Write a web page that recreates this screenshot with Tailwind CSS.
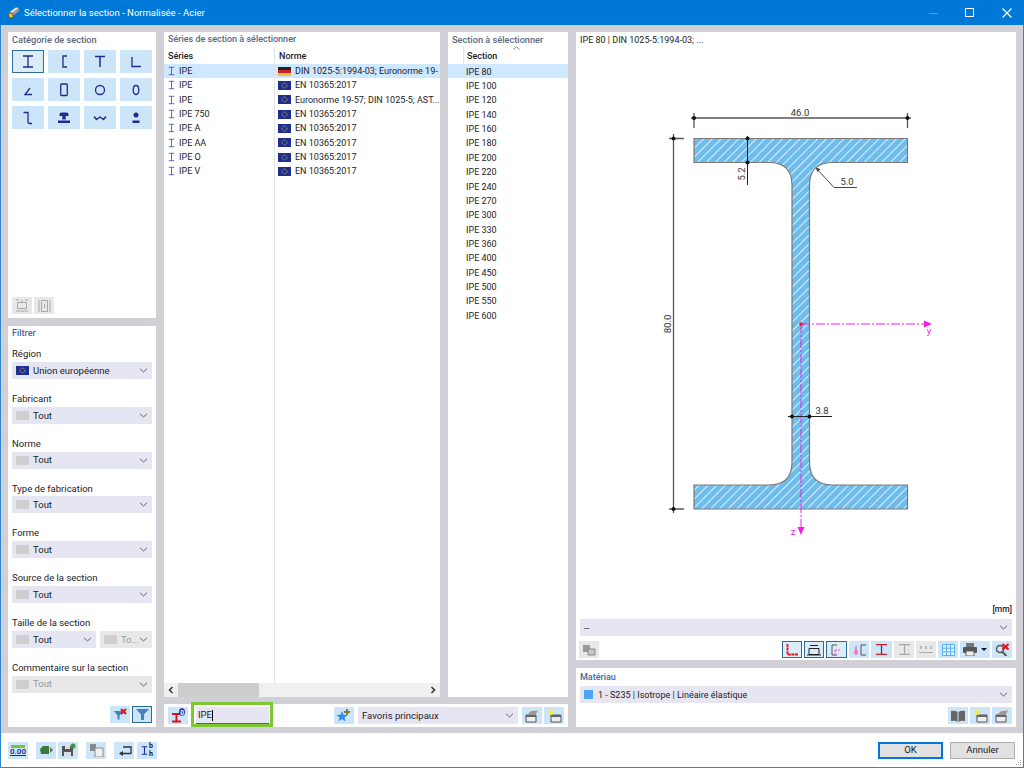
<!DOCTYPE html>
<html lang="fr">

<head>
  <meta charset="UTF-8">
  <title>Sélectionner la section - Normalisée - Acier</title>
  <script src="https://cdn.jsdelivr.net/npm/@tailwindcss/browser@4"></script>
</head>

<body class="w-[1024px] h-[768px] overflow-hidden bg-white font-['Roboto',sans-serif] text-[9.5px] leading-none text-[#1c1c28]">
  <!-- shared glyphs -->
  <svg class="hidden">
    <symbol id="eu" viewBox="0 0 13 9"><rect width="13" height="9" fill="#1f2f8f"/><circle cx="6.5" cy="4.5" r="2.4" fill="none" stroke="#a9a56a" stroke-width="1" stroke-dasharray="1 .6"/></symbol>
    <symbol id="de" viewBox="0 0 13 9"><rect width="13" height="3" fill="#222"/><rect y="3" width="13" height="3" fill="#c8202a"/><rect y="6" width="13" height="3" fill="#eec22e"/></symbol>
    <symbol id="none" viewBox="0 0 13 9"><rect width="13" height="9" fill="#cfcfcf"/></symbol>
    <symbol id="chev" viewBox="0 0 9 5"><path d="M1 .8 4.5 4 8 .8" fill="none" stroke="#666" stroke-width="1"/></symbol>
    <symbol id="ib" viewBox="0 0 9 11"><path d="M1 .7h7M1 10.3h7M4.5 .7v9.6" fill="none" stroke="#3443a8" stroke-width="1"/></symbol>
  </svg>

  <div class="flex flex-col h-full border-x border-b border-[#2f86cc]">
    <!-- title bar -->
    <div class="flex items-center h-[25px] -mx-px bg-[#0078d7] text-white text-[9.5px] shrink-0">
      <svg class="w-[13px] h-[13px] ml-[7px]" viewBox="0 0 13 13"><path d="M2 6.500 8 1.500q3-1 4 1t-1 3.500L6 10z" fill="#8f98a3"/><path d="M3 6 8.500 2q2-.5 2.500.5L5 7z" fill="#e2e4e8"/><path d="M1 7.500 5 7 6.500 11 2.500 12.500z" fill="#f2c420" stroke="#4a4020" stroke-width=".7"/></svg>
      <span class="ml-[4px]">Sélectionner la section - Normalisée - Acier</span>
      <svg class="ml-auto w-[9px] h-[10px]" viewBox="0 0 9 10"><path d="M0 5.500h9" stroke="#4a9ce6"/></svg>
      <svg class="ml-[27px] w-[9px] h-[9px]" viewBox="0 0 9 9"><rect x=".5" y=".5" width="8" height="8" fill="none" stroke="#fff"/></svg>
      <svg class="ml-[28px] mr-[12px] w-[10px] h-[10px]" viewBox="0 0 10 10"><path d="M.5 .5l9 9M9.500 .5l-9 9" stroke="#fff" stroke-width="1.200"/></svg>
    </div>

    <!-- main area -->
    <div class="flex gap-[8px] h-[708px] bg-[#d0d0d6] pt-[7px] pb-[6px] px-[7px] shrink-0">
      <!-- left column -->
      <div class="flex flex-col gap-[8px] w-[148px]">
        <div class="flex flex-col h-[286px] bg-white px-[4px]">
          <div class="h-[18px] pb-[3px] flex items-center text-[9.200px] font-medium text-[#5b6880]">Catégorie de section</div>
          <div class="grid grid-cols-4 gap-x-[4px] gap-y-[5px] w-[140px]">
            <div class="h-[23px] bg-[#dcebf8] border border-[#2d6c9e]"><svg class="w-[30px] h-[21px]" viewBox="1 1 30 21"><path d="M11 6h10M11 17h10M16 6v11" fill="none" stroke="#1e2d8c" stroke-width="1.3"/></svg></div>
            <div class="h-[23px] bg-[#cde5f8]"><svg class="w-[32px] h-[23px]" viewBox="0 0 32 23"><path d="M19 6h-4v11h4" fill="none" stroke="#1e2d8c" stroke-width="1.3"/></svg></div>
            <div class="h-[23px] bg-[#cde5f8]"><svg class="w-[32px] h-[23px]" viewBox="0 0 32 23"><path d="M11 6.500h10M16 6v11" fill="none" stroke="#1e2d8c" stroke-width="1.5"/></svg></div>
            <div class="h-[23px] bg-[#cde5f8]"><svg class="w-[32px] h-[23px]" viewBox="0 0 32 23"><path d="M12 7v9.500h9" fill="none" stroke="#1e2d8c" stroke-width="1.3"/></svg></div>
            <div class="h-[23px] bg-[#cde5f8]"><svg class="w-[32px] h-[23px]" viewBox="0 0 32 23"><path d="M18 10 13 16.500h7" fill="none" stroke="#1e2d8c" stroke-width="1.3"/></svg></div>
            <div class="h-[23px] bg-[#cde5f8]"><svg class="w-[32px] h-[23px]" viewBox="0 0 32 23"><rect x="12.700" y="6" width="6.600" height="11.500" rx="1" fill="none" stroke="#1e2d8c" stroke-width="1.3"/></svg></div>
            <div class="h-[23px] bg-[#cde5f8]"><svg class="w-[32px] h-[23px]" viewBox="0 0 32 23"><circle cx="16" cy="12" r="4.500" fill="none" stroke="#1e2d8c" stroke-width="1.3"/></svg></div>
            <div class="h-[23px] bg-[#cde5f8]"><svg class="w-[32px] h-[23px]" viewBox="0 0 32 23"><ellipse cx="16" cy="12" rx="2.800" ry="4.500" fill="none" stroke="#1e2d8c" stroke-width="1.3"/></svg></div>
            <div class="h-[23px] bg-[#cde5f8]"><svg class="w-[32px] h-[23px]" viewBox="0 0 32 23"><path d="M11.500 6.500h4.500v9q0 2 2 2h2" fill="none" stroke="#1e2d8c" stroke-width="1.3"/></svg></div>
            <div class="h-[23px] bg-[#cde5f8]"><svg class="w-[32px] h-[23px]" viewBox="0 0 32 23"><path d="M11.500 8.500q0-2 2-2h5q2 0 2 2v1.500h-2.800v3.500h-3.400v-3.500h-2.800zM10 14.500h12v2.500h-12z" fill="#1e2d8c"/></svg></div>
            <div class="h-[23px] bg-[#cde5f8]"><svg class="w-[32px] h-[23px]" viewBox="0 0 32 23"><path d="M10 10.500 12.500 13.500 16 11 19.500 13.500 22 10.500" fill="none" stroke="#1e2d8c" stroke-width="1.500" stroke-linejoin="round"/></svg></div>
            <div class="h-[23px] bg-[#cde5f8]"><svg class="w-[32px] h-[23px]" viewBox="0 0 32 23"><circle cx="16" cy="9" r="2.500" fill="#1e2d8c"/><rect x="12.500" y="14.500" width="7" height="2.500" fill="#1e2d8c"/></svg></div>
          </div>
          <div class="mt-auto mb-[4px] flex gap-[2px]">
            <div class="w-[20px] h-[17px] bg-[#e8e8e8] flex items-center justify-center"><svg class="w-[14px] h-[13px]" viewBox="0 0 14 13"><path d="M2.500 3.500h9v6h-9zM1 1h3M10 1h3M1 12h12M7 1v2" fill="none" stroke="#a8a8a8"/></svg></div>
            <div class="w-[20px] h-[17px] bg-[#e8e8e8] flex items-center justify-center"><svg class="w-[13px] h-[14px]" viewBox="0 0 13 14"><path d="M3.500 1.500h6v11h-6zM1 1v12M12 1v12M6.500 5v4" fill="none" stroke="#a8a8a8"/></svg></div>
          </div>
        </div>

        <div class="relative flex flex-col h-[401px] bg-white px-[4px]">
          <div class="h-[15px] mb-[6px] flex items-center text-[9px] font-medium text-[#3d6aa0]">Filtrer</div>
          <div class="h-[44.800px]">
            <div class="h-[15px] pb-[1px] flex items-center">Région</div>
            <div class="flex items-center h-[17px] bg-[#e6e6f2] pl-[4px] pr-[4px]"><svg class="w-[13px] h-[9px]"><use href="#eu"/></svg><span class="ml-[4px] flex-1">Union européenne</span><svg class="w-[9px] h-[5px]"><use href="#chev"/></svg></div>
          </div>
          <div class="h-[44.800px]">
            <div class="h-[15px] pb-[1px] flex items-center">Fabricant</div>
            <div class="flex items-center h-[17px] bg-[#e6e6f2] pl-[4px] pr-[4px]"><svg class="w-[13px] h-[9px]"><use href="#none"/></svg><span class="ml-[4px] flex-1">Tout</span><svg class="w-[9px] h-[5px]"><use href="#chev"/></svg></div>
          </div>
          <div class="h-[44.800px]">
            <div class="h-[15px] pb-[1px] flex items-center">Norme</div>
            <div class="flex items-center h-[17px] bg-[#e6e6f2] pl-[4px] pr-[4px]"><svg class="w-[13px] h-[9px]"><use href="#none"/></svg><span class="ml-[4px] flex-1">Tout</span><svg class="w-[9px] h-[5px]"><use href="#chev"/></svg></div>
          </div>
          <div class="h-[44.800px]">
            <div class="h-[15px] pb-[1px] flex items-center">Type de fabrication</div>
            <div class="flex items-center h-[17px] bg-[#e6e6f2] pl-[4px] pr-[4px]"><svg class="w-[13px] h-[9px]"><use href="#none"/></svg><span class="ml-[4px] flex-1">Tout</span><svg class="w-[9px] h-[5px]"><use href="#chev"/></svg></div>
          </div>
          <div class="h-[44.800px]">
            <div class="h-[15px] pb-[1px] flex items-center">Forme</div>
            <div class="flex items-center h-[17px] bg-[#e6e6f2] pl-[4px] pr-[4px]"><svg class="w-[13px] h-[9px]"><use href="#none"/></svg><span class="ml-[4px] flex-1">Tout</span><svg class="w-[9px] h-[5px]"><use href="#chev"/></svg></div>
          </div>
          <div class="h-[44.800px]">
            <div class="h-[15px] pb-[1px] flex items-center">Source de la section</div>
            <div class="flex items-center h-[17px] bg-[#e6e6f2] pl-[4px] pr-[4px]"><svg class="w-[13px] h-[9px]"><use href="#none"/></svg><span class="ml-[4px] flex-1">Tout</span><svg class="w-[9px] h-[5px]"><use href="#chev"/></svg></div>
          </div>
          <div class="h-[44.800px]">
            <div class="h-[15px] pb-[1px] flex items-center">Taille de la section</div>
            <div class="flex gap-[4px]">
              <div class="flex items-center w-[84px] h-[17px] bg-[#e6e6f2] pl-[4px] pr-[4px]"><svg class="w-[13px] h-[9px]"><use href="#none"/></svg><span class="ml-[4px] flex-1">Tout</span><svg class="w-[9px] h-[5px]"><use href="#chev"/></svg></div>
              <div class="flex items-center w-[52px] h-[17px] bg-[#e8e8e8] pl-[4px] pr-[4px] text-[#999]"><svg class="w-[13px] h-[9px]"><use href="#none"/></svg><span class="ml-[4px] flex-1">To...</span><svg class="w-[9px] h-[5px]"><use href="#chev"/></svg></div>
            </div>
          </div>
          <div class="h-[44.800px]">
            <div class="h-[15px] pb-[1px] flex items-center">Commentaire sur la section</div>
            <div class="flex items-center h-[17px] bg-[#e8e8e8] pl-[4px] pr-[4px] text-[#999]"><svg class="w-[13px] h-[9px]"><use href="#none"/></svg><span class="ml-[4px] flex-1">Tout</span><svg class="w-[9px] h-[5px]"><use href="#chev"/></svg></div>
          </div>
          <div class="mt-auto mb-[4px] flex justify-end gap-[2px]">
            <div class="w-[20px] h-[17px] bg-[#cde5f8] flex items-center justify-center"><svg class="w-[15px] h-[13px]" viewBox="0 0 15 13"><path d="M1 3h9L6.500 7.500V12L4.500 11V7.500z" fill="#4a7fc0"/><path d="M8 1l5 5M13 1 8 6" stroke="#e0101c" stroke-width="2"/></svg></div>
            <div class="w-[20px] h-[17px] bg-[#cde5f8] border border-[#2d6c9e] flex items-center justify-center"><svg class="w-[13px] h-[11px]" viewBox="0 0 13 11"><path d="M0 0h13L8 5.500V11H5V5.500z" fill="#4a7fc0"/></svg></div>
          </div>
        </div>
      </div>

      <!-- middle column -->
      <div class="flex flex-col gap-[7px] w-[404px]">
        <div class="flex gap-[8px] h-[665px]">
          <div class="flex flex-col w-[276px] bg-white">
            <div class="h-[15px] pl-[4px] flex items-center text-[9px] font-medium text-[#5b6880]">Séries de section à sélectionner</div>
            <div class="flex flex-1 text-[9px] [&_span]:pt-[1px]">
              <div class="w-[111px] border-r border-[#e4e4e4] shrink-0">
                <div class="h-[17px] pl-[4px] pt-[2px] flex items-center font-medium">Séries</div>
                <div class="flex items-center h-[14.330px] bg-[#cde8ff] pl-[4px]"><svg class="w-[7px] h-[10px]"><use href="#ib"/></svg><span class="ml-[4px]">IPE</span></div>
                <div class="flex items-center h-[14.330px] pl-[4px]"><svg class="w-[7px] h-[10px]"><use href="#ib"/></svg><span class="ml-[4px]">IPE</span></div>
                <div class="flex items-center h-[14.330px] pl-[4px]"><svg class="w-[7px] h-[10px]"><use href="#ib"/></svg><span class="ml-[4px]">IPE</span></div>
                <div class="flex items-center h-[14.330px] pl-[4px]"><svg class="w-[7px] h-[10px]"><use href="#ib"/></svg><span class="ml-[4px]">IPE 750</span></div>
                <div class="flex items-center h-[14.330px] pl-[4px]"><svg class="w-[7px] h-[10px]"><use href="#ib"/></svg><span class="ml-[4px]">IPE A</span></div>
                <div class="flex items-center h-[14.330px] pl-[4px]"><svg class="w-[7px] h-[10px]"><use href="#ib"/></svg><span class="ml-[4px]">IPE AA</span></div>
                <div class="flex items-center h-[14.330px] pl-[4px]"><svg class="w-[7px] h-[10px]"><use href="#ib"/></svg><span class="ml-[4px]">IPE O</span></div>
                <div class="flex items-center h-[14.330px] pl-[4px]"><svg class="w-[7px] h-[10px]"><use href="#ib"/></svg><span class="ml-[4px]">IPE V</span></div>
              </div>
              <div class="flex-1 min-w-0">
                <div class="h-[17px] pl-[4px] pt-[2px] flex items-center font-medium">Norme</div>
                <div class="flex items-center h-[14.330px] bg-[#cde8ff] pl-[3px] whitespace-nowrap overflow-hidden"><svg class="w-[13px] h-[9px] shrink-0"><use href="#de"/></svg><span class="ml-[4px]">DIN 1025-5:1994-03; Euronorme 19-</span></div>
                <div class="flex items-center h-[14.330px] pl-[3px]"><svg class="w-[13px] h-[9px] shrink-0"><use href="#eu"/></svg><span class="ml-[4px]">EN 10365:2017</span></div>
                <div class="flex items-center h-[14.330px] pl-[3px] whitespace-nowrap overflow-hidden"><svg class="w-[13px] h-[9px] shrink-0"><use href="#eu"/></svg><span class="ml-[4px]">Euronorme 19-57; DIN 1025-5; AST...</span></div>
                <div class="flex items-center h-[14.330px] pl-[3px]"><svg class="w-[13px] h-[9px] shrink-0"><use href="#eu"/></svg><span class="ml-[4px]">EN 10365:2017</span></div>
                <div class="flex items-center h-[14.330px] pl-[3px]"><svg class="w-[13px] h-[9px] shrink-0"><use href="#eu"/></svg><span class="ml-[4px]">EN 10365:2017</span></div>
                <div class="flex items-center h-[14.330px] pl-[3px]"><svg class="w-[13px] h-[9px] shrink-0"><use href="#eu"/></svg><span class="ml-[4px]">EN 10365:2017</span></div>
                <div class="flex items-center h-[14.330px] pl-[3px]"><svg class="w-[13px] h-[9px] shrink-0"><use href="#eu"/></svg><span class="ml-[4px]">EN 10365:2017</span></div>
                <div class="flex items-center h-[14.330px] pl-[3px]"><svg class="w-[13px] h-[9px] shrink-0"><use href="#eu"/></svg><span class="ml-[4px]">EN 10365:2017</span></div>
              </div>
            </div>
            <div class="flex items-center h-[14px] bg-[#f0f0f0]">
              <svg class="w-[14px] h-[14px]" viewBox="0 0 14 14"><path d="M8.500 4 5.500 7l3 3" fill="none" stroke="#333" stroke-width="1.500"/></svg>
              <div class="w-[81px] h-full bg-[#cdcdcd]"></div>
              <svg class="ml-auto w-[14px] h-[14px]" viewBox="0 0 14 14"><path d="M5.500 4l3 3-3 3" fill="none" stroke="#333" stroke-width="1.500"/></svg>
            </div>
          </div>

          <div class="relative w-[120px] bg-white text-[9px]">
            <div class="h-[15px] pl-[4px] flex items-center text-[9.200px] font-medium text-[#5b6880]">Section à sélectionner</div>
            <svg class="absolute left-[65px] top-[14px] w-[7px] h-[4px]" viewBox="0 0 7 4"><path d="M.5 3.500 3.500 .8l3 2.700" fill="none" stroke="#888"/></svg>
            <div class="ml-[15px] h-[17px] pl-[3px] pt-[2px] flex items-center font-medium border-l border-[#e4e4e4]">Section</div>
            <div class="[&>div]:pt-[2px]">
              <div class="flex items-center h-[14.370px] bg-[#cde8ff] pl-[18px]">IPE 80</div>
              <div class="flex items-center h-[14.370px] pl-[18px]">IPE 100</div>
              <div class="flex items-center h-[14.370px] pl-[18px]">IPE 120</div>
              <div class="flex items-center h-[14.370px] pl-[18px]">IPE 140</div>
              <div class="flex items-center h-[14.370px] pl-[18px]">IPE 160</div>
              <div class="flex items-center h-[14.370px] pl-[18px]">IPE 180</div>
              <div class="flex items-center h-[14.370px] pl-[18px]">IPE 200</div>
              <div class="flex items-center h-[14.370px] pl-[18px]">IPE 220</div>
              <div class="flex items-center h-[14.370px] pl-[18px]">IPE 240</div>
              <div class="flex items-center h-[14.370px] pl-[18px]">IPE 270</div>
              <div class="flex items-center h-[14.370px] pl-[18px]">IPE 300</div>
              <div class="flex items-center h-[14.370px] pl-[18px]">IPE 330</div>
              <div class="flex items-center h-[14.370px] pl-[18px]">IPE 360</div>
              <div class="flex items-center h-[14.370px] pl-[18px]">IPE 400</div>
              <div class="flex items-center h-[14.370px] pl-[18px]">IPE 450</div>
              <div class="flex items-center h-[14.370px] pl-[18px]">IPE 500</div>
              <div class="flex items-center h-[14.370px] pl-[18px]">IPE 550</div>
              <div class="flex items-center h-[14.370px] pl-[18px]">IPE 600</div>
            </div>
          </div>
        </div>

        <!-- search and favourites -->
        <div class="flex items-center h-[23px] bg-white pl-[4px] pr-[4px]">
          <div class="w-[20px] h-[17px] bg-[#cde5f8] flex items-center justify-center"><svg class="w-[16px] h-[15px]" viewBox="0 0 16 15"><path d="M2 6h9M2 13.500h9M6.500 6v7" stroke="#d8121c" stroke-width="2" fill="none"/><ellipse cx="12" cy="4" rx="3" ry="3.800" fill="#1f2f9f"/><text x="12" y="6.500" font-size="6.500" font-weight="700" text-anchor="middle" fill="#fff">0</text></svg></div>
          <div class="relative ml-[8px] w-[73px] h-[17px] bg-[#e6e6f2] border-b border-[#5a55a5] pl-[2px] flex items-center">IPE<span class="w-px h-[11px] bg-black"></span>
            <div class="absolute left-[-5px] right-[-4px] top-[-5px] bottom-[-4px] border-[3px] border-[#7dc832]"></div>
          </div>
          <div class="ml-[65px] w-[20px] h-[17px] bg-[#cde5f8] flex items-center justify-center"><svg class="w-[16px] h-[15px]" viewBox="0 0 16 15"><path d="M6 3l1.600 3.700 4 .3-3 2.600 1 3.900L6 11l-3.500 2.500 1-3.900-3-2.600 4-.3z" fill="#2f8ff0"/><path d="M11 1v6M8 4h6" stroke="#8a7a30" stroke-width="2"/></svg></div>
          <div class="ml-[4px] flex items-center w-[160px] h-[17px] bg-[#e6e6f2] pl-[4px] pr-[4px]"><span class="flex-1">Favoris principaux</span><svg class="w-[9px] h-[5px]"><use href="#chev"/></svg></div>
          <div class="ml-[4px] w-[20px] h-[17px] bg-[#cde5f8] flex items-center justify-center"><svg class="w-[15px] h-[14px]" viewBox="0 0 15 14"><path d="M1 6h10v7H1z" fill="#eee" stroke="#555"/><path d="M1 6h10v2H1z" fill="#666"/><path d="M3 5q3-4 7-3l3-1-2 4H3z" fill="#b09080"/></svg></div>
          <div class="ml-[2px] w-[20px] h-[17px] bg-[#cde5f8] flex items-center justify-center"><svg class="w-[15px] h-[14px]" viewBox="0 0 15 14"><path d="M4 6h10v7H4z" fill="#eee" stroke="#555"/><path d="M4 6h10v2H4z" fill="#666"/><circle cx="4" cy="3.500" r="2.500" fill="#f2ec50"/></svg></div>
        </div>
      </div>

      <!-- right column -->
      <div class="flex flex-col gap-[8px] w-[440px]">
        <div class="flex flex-col h-[628px] bg-white">
          <div class="h-[16px] pl-[4px] flex items-center text-[9px]">IPE 80 | DIN 1025-5:1994-03; ...</div>
          <svg class="w-[440px] h-[569px] shrink-0" viewBox="576 48 440 569" font-size="9.500" fill="#333">
            <defs>
              <pattern id="hatch" width="6.200" height="6.200" patternUnits="userSpaceOnUse" patternTransform="rotate(45)"><rect width="6.200" height="6.200" fill="#6dbcec"/><rect x="0" width="1" height="6.200" fill="#dff0fb"/></pattern>
            </defs>
            <path d="M694 138.500H907.500V162.500H832.500Q809.500 162.500 809.500 185.500V462Q809.500 485 832.500 485H907.500V509H694V485H769Q792 485 792 462V185.500Q792 162.500 769 162.500H694Z" fill="url(#hatch)" stroke="#7a7a7a" stroke-width="1.200"/>
            <!-- width -->
            <path d="M691 118H911M694 113V128M907.500 113V128" stroke="#555" stroke-width="1.300" fill="none"/>
            <circle cx="694" cy="118" r="2" fill="#111"/><circle cx="907.500" cy="118" r="2" fill="#111"/>
            <text x="800" y="116" text-anchor="middle">46.0</text>
            <!-- height -->
            <path d="M673.500 134V513M669 138.500H684M669 509H684" stroke="#555" stroke-width="1.300" fill="none"/>
            <circle cx="673.500" cy="138.500" r="2" fill="#111"/><circle cx="673.500" cy="509" r="2" fill="#111"/>
            <text transform="translate(671 324) rotate(-90)" text-anchor="middle">80.0</text>
            <!-- flange -->
            <path d="M747.500 136V185" stroke="#222" fill="none"/>
            <circle cx="747.500" cy="138.500" r="2" fill="#111"/><circle cx="747.500" cy="162.500" r="2" fill="#111"/>
            <text transform="translate(745 174) rotate(-90)" text-anchor="middle">5.2</text>
            <!-- radius -->
            <path d="M816 168 834 187.500H857" stroke="#444" fill="none"/><path d="M815.500 167.500l5 1.500-3 3z" fill="#444"/>
            <text x="847" y="185" text-anchor="middle">5.0</text>
            <!-- axes -->
            <path d="M801 324H926" stroke="#f020e0" stroke-width="1" stroke-dasharray="9 2 2 2"/>
            <path d="M801 324V528" stroke="#f020e0" stroke-width="1" stroke-dasharray="9 2 2 2"/>
            <path d="M924 320.500 932 324 924 327.500z" fill="#f020e0"/><path d="M797.500 527H804.500L801 535z" fill="#f020e0"/>
            <circle cx="801" cy="324" r="1.800" fill="#f01030"/>
            <text x="929" y="334" text-anchor="middle" fill="#f020e0">y</text>
            <text x="793" y="535" text-anchor="middle" fill="#f020e0">z</text>
            <!-- web -->
            <path d="M788 416.500H832" stroke="#222" fill="none"/>
            <circle cx="792" cy="416.500" r="2" fill="#111"/><circle cx="809.500" cy="416.500" r="2" fill="#111"/>
            <text x="822" y="414" text-anchor="middle">3.8</text>
          </svg>
          <div class="-mt-[15px] pr-[4px] h-[15px] flex items-center justify-end text-[8.500px] font-medium">[mm]</div>
          <div class="mx-[4px] mt-[2px] flex items-center h-[17px] bg-[#e6e6f2] pl-[4px] pr-[4px]"><span class="flex-1">--</span><svg class="w-[9px] h-[5px]"><use href="#chev"/></svg></div>
          <div class="mt-[5px] pr-[4px] flex justify-end gap-[2px]">
            <div class="mr-[181px] w-[20px] h-[17px] bg-[#e8e8e8] flex items-center justify-center"><svg class="w-[14px] h-[12px]" viewBox="0 0 14 12"><path d="M1 1h7v7H1z" fill="#999"/><path d="M6 5h7v6H6z" fill="#c8c8c8" stroke="#888"/></svg></div>
            <div class="w-[20px] h-[17px] bg-[#dcebf8] border border-[#2d6c9e] flex items-center justify-center"><svg class="w-[13px] h-[12px]" viewBox="0 0 13 12"><path d="M1.500 0v10.500H12" fill="none" stroke="#e01020" stroke-width="1.800" stroke-dasharray="3 .6"/></svg></div>
            <div class="w-[20px] h-[17px] bg-[#dcebf8] border border-[#2d6c9e] flex items-center justify-center"><svg class="w-[14px] h-[12px]" viewBox="0 0 14 12"><path d="M2 4.500h10v6H2zM0 11h14M3 1.500h8" fill="none" stroke="#222"/></svg></div>
            <div class="w-[21px] h-[17px] bg-[#dcebf8] border border-[#2d6c9e] flex items-center justify-center"><svg class="w-[14px] h-[12px]" viewBox="0 0 14 12"><path d="M7 1H2v10h5" fill="none" stroke="#555"/><path d="M5 6h6M5 6v5" stroke="#f040d0" stroke-dasharray="2 1"/></svg></div>
            <div class="w-[20px] h-[17px] bg-[#cde5f8] flex items-center justify-center"><svg class="w-[15px] h-[12px]" viewBox="0 0 15 12"><path d="M14 1H9v10h5" fill="none" stroke="#555"/><circle cx="4" cy="8" r="2.500" fill="#f0a0d0"/><path d="M4 2v9" stroke="#f040a0"/></svg></div>
            <div class="w-[21px] h-[17px] bg-[#cde5f8] flex items-center justify-center"><svg class="w-[13px] h-[11px]" viewBox="0 0 13 11"><path d="M1 .7h11M1 10.300h11" stroke="#d02030" stroke-width="1.300"/><path d="M6.500 1v9" stroke="#444" stroke-width="1.300"/></svg></div>
            <div class="w-[20px] h-[17px] bg-[#e8e8e8] flex items-center justify-center"><svg class="w-[13px] h-[11px]" viewBox="0 0 13 11"><path d="M1 .7h11M1 10.300h11M6.500 1v9" stroke="#aaa" stroke-width="1.300"/></svg></div>
            <div class="w-[20px] h-[17px] bg-[#e8e8e8] flex items-center justify-center"><svg class="w-[14px] h-[10px]" viewBox="0 0 14 10"><path d="M0 7.500h14" stroke="#aaa"/><path d="M2 1v3M7 1v3M12 1v3" stroke="#aaa" stroke-width="1.500"/></svg></div>
            <div class="w-[20px] h-[17px] bg-[#cde5f8] flex items-center justify-center"><svg class="w-[13px] h-[12px]" viewBox="0 0 13 12"><path d="M.5.500h12v11H.5zM4.500.500v11M8.500.500v11M.5 4.200h12M.5 7.800h12" fill="#e4f2fc" stroke="#5ab0f0"/></svg></div>
            <div class="w-[30px] h-[17px] bg-[#cde5f8] flex items-center pl-[3px]"><svg class="w-[14px] h-[13px]" viewBox="0 0 14 13"><path d="M3 0h8v4H3z" fill="#777"/><rect y="4" width="14" height="6" rx="1" fill="#555"/><path d="M3 8h8v5H3z" fill="#eee" stroke="#666"/></svg><svg class="ml-[4px] w-[6px] h-[3px]" viewBox="0 0 6 3"><path d="M0 0h6L3 3z" fill="#111"/></svg></div>
            <div class="w-[20px] h-[17px] bg-[#cde5f8] flex items-center justify-center"><svg class="w-[14px] h-[13px]" viewBox="0 0 14 13"><circle cx="5" cy="6" r="3.500" fill="none" stroke="#555" stroke-width="1.500"/><path d="M7.500 9l4 4" stroke="#555" stroke-width="2"/><path d="M7.500 1l6 5.500M13.500 1l-6 5.500" stroke="#e0101c" stroke-width="2"/></svg></div>
          </div>
        </div>

        <div class="flex flex-col h-[59px] bg-white px-[4px]">
          <div class="h-[18px] flex items-center text-[9px] font-medium text-[#3d6aa0]">Matériau</div>
          <div class="flex items-center h-[17px] bg-[#e6e6f2] pl-[4px] pr-[4px] text-[9px]"><span class="w-[9px] h-[9px] bg-[#4ea5f5]"></span><span class="ml-[5px] pt-[1px] flex-1">1 - S235 | Isotrope | Linéaire élastique</span><svg class="w-[9px] h-[5px]"><use href="#chev"/></svg></div>
          <div class="mt-[4px] flex justify-end gap-[2px]">
            <div class="w-[20px] h-[17px] bg-[#cde5f8] flex items-center justify-center"><svg class="w-[14px] h-[12px]" viewBox="0 0 14 12"><path d="M0 1q4-1 6.500 1v10Q4 10 0 11zM14 1q-4-1-6.500 1v10q2.500-2 6.500-1z" fill="#666"/></svg></div>
            <div class="w-[20px] h-[17px] bg-[#cde5f8] flex items-center justify-center"><svg class="w-[15px] h-[14px]" viewBox="0 0 15 14"><path d="M4 6h10v7H4z" fill="#eee" stroke="#555"/><path d="M4 6h10v2H4z" fill="#666"/><circle cx="4" cy="3.500" r="2.500" fill="#f2ec50"/></svg></div>
            <div class="w-[20px] h-[17px] bg-[#cde5f8] flex items-center justify-center"><svg class="w-[15px] h-[14px]" viewBox="0 0 15 14"><path d="M1 6h10v7H1z" fill="#eee" stroke="#555"/><path d="M1 6h10v2H1z" fill="#666"/><path d="M3 5q3-4 7-3l3-1-2 4H3z" fill="#b09080"/></svg></div>
          </div>
        </div>
      </div>
    </div>

    <!-- footer -->
    <div class="flex items-center flex-1 pl-[7px] pr-[8px] relative">
      <div class="w-[20px] h-[17px] bg-[#cde5f8] flex flex-col items-center justify-center"><div class="w-[14px] h-[3px] bg-[#7cc04a]"></div><span class="text-[8px] font-semibold text-[#1e2d8c] underline">0.00</span></div>
      <div class="ml-[8px] w-[20px] h-[17px] bg-[#cde5f8] flex items-center justify-center"><svg class="w-[15px] h-[12px]" viewBox="0 0 15 12"><path d="M1 5l3-3h6v8H2z" fill="#3c7a3c"/><path d="M11 3l3 3-3 3z" fill="#666"/></svg></div>
      <div class="ml-[2px] w-[20px] h-[17px] bg-[#cde5f8] flex items-center justify-center"><svg class="w-[15px] h-[14px]" viewBox="0 0 15 14"><path d="M1 3h11v10H1z" fill="#555"/><path d="M4 3h5v3H4zM3 9h7v4H3z" fill="#ddd"/><circle cx="12" cy="3" r="2.500" fill="#3c9a3c"/></svg></div>
      <div class="ml-[8px] w-[20px] h-[17px] bg-[#cde5f8] flex items-center justify-center"><svg class="w-[15px] h-[14px]" viewBox="0 0 15 14"><path d="M1 1h6v7H1z" fill="#888"/><path d="M6 5h8v9H6z" fill="#f2f2f2" stroke="#888"/></svg></div>
      <div class="ml-[8px] w-[20px] h-[17px] bg-[#cde5f8] flex items-center justify-center"><svg class="w-[15px] h-[13px]" viewBox="0 0 15 13"><path d="M3 9.500h11V3H6" fill="none" stroke="#333" stroke-width="1.300"/><path d="M6 7 2 9.500 6 12z" fill="#333"/></svg></div>
      <div class="ml-[3px] w-[20px] h-[17px] bg-[#cde5f8] flex items-center justify-center"><svg class="w-[7px] h-[9px]" viewBox="0 0 9 11"><path d="M1 .7h7M1 10.300h7M4.500 .7v9.600" fill="none" stroke="#1e2d9c" stroke-width="1.500"/></svg><span class="ml-[1px] text-[7px] font-bold leading-[8px] text-[#222] text-center">b<br>h</span></div>
      <div class="ml-auto w-[65px] h-[17px] bg-[#e1e1e1] border-2 border-[#0078d7] flex items-center justify-center">OK</div>
      <div class="ml-[7px] w-[65px] h-[17px] bg-[#e1e1e1] border border-[#adadad] flex items-center justify-center">Annuler</div>
      <svg class="absolute right-[1px] bottom-[1px] w-[7px] h-[7px]" viewBox="0 0 7 7"><path d="M5 1h1v1H5zM3 3h1v1H3zM5 3h1v1H5zM1 5h1v1H1zM3 5h1v1H3zM5 5h1v1H5z" fill="#aaa"/></svg>
    </div>
  </div>
</body>

</html>
